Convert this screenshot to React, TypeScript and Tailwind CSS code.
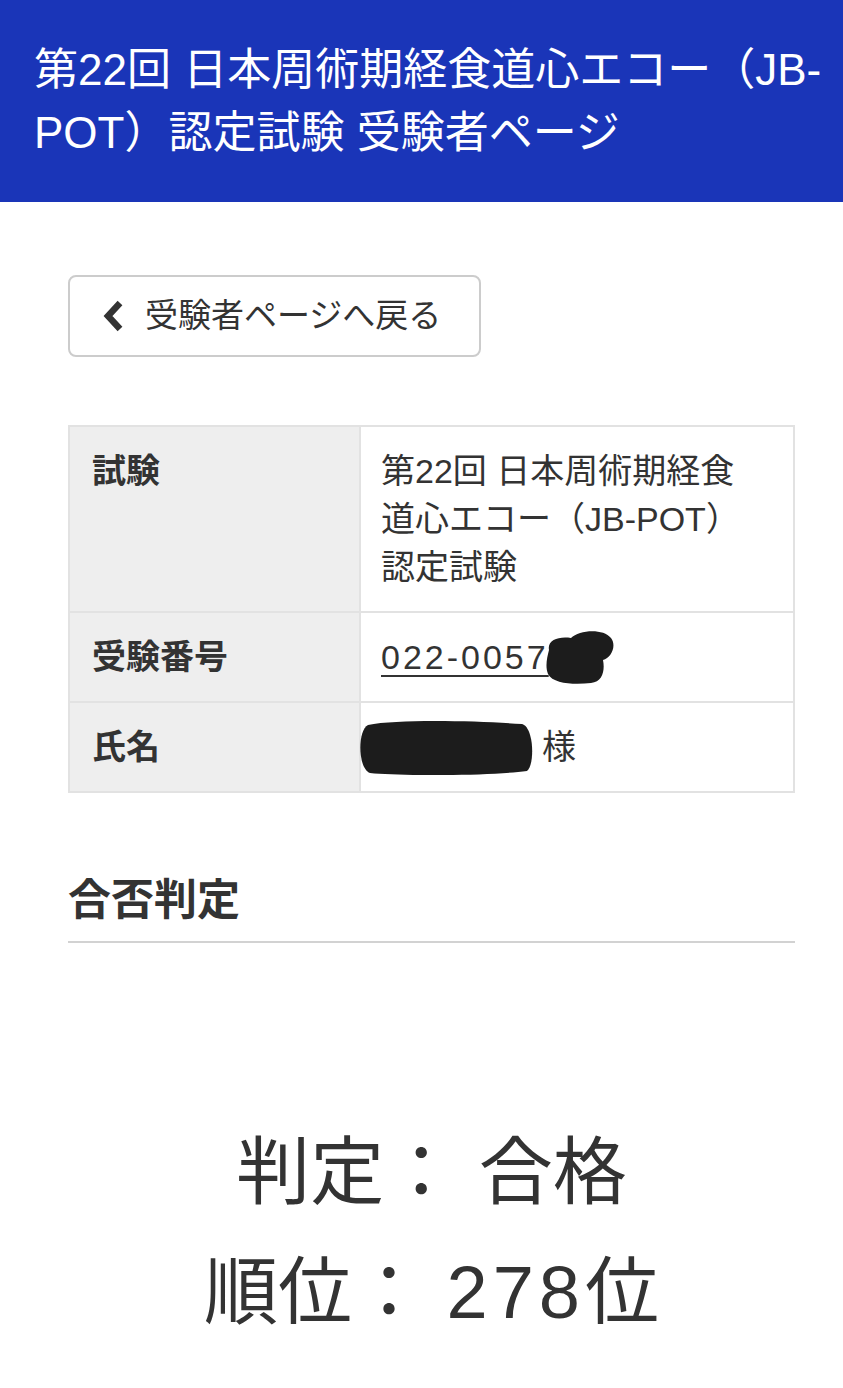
import type { ReactNode } from "react"

const FONT = "font-['Liberation_Sans','Noto_Sans_CJK_JP',sans-serif]"

function ChevronLeft() {
	return (
		<svg width="24" height="32" viewBox="0 0 24 32" aria-hidden="true">
			<polyline
				points="18,3 6,16 18,29"
				fill="none"
				stroke="#333333"
				strokeWidth="6.5"
				strokeLinejoin="miter"
				strokeLinecap="butt"
			/>
		</svg>
	)
}

// 黒塗り（個人情報の伏せ字）
function NumberBlot() {
	return (
		<svg width="70" height="54" viewBox="0 0 70 54" className="-ml-[4px] shrink-0" aria-hidden="true">
			<path
				d="M4 20 C2 10 14 6 26 8 C34 0 58 -2 66 8 C72 16 66 28 58 30 C60 40 58 52 46 53 C30 55 8 54 3 44 C0 36 2 28 4 20 Z"
				fill="#1c1c1c"
			/>
		</svg>
	)
}

function NameBlot() {
	return (
		<svg width="176" height="56" viewBox="0 0 176 56" className="-ml-[23px] shrink-0" aria-hidden="true">
			<path
				d="M10 6 C40 0 120 2 164 5 C176 8 177 46 169 52 C130 57 40 57 12 54 C0 50 -1 12 10 6 Z"
				fill="#1c1c1c"
			/>
		</svg>
	)
}

type RowProps = {
	label: string
	children: ReactNode
}

function InfoRow({ label, children }: RowProps) {
	return (
		<tr>
			<th className="border-2 border-[#e2e2e2] bg-[#eeeeee] px-[22px] py-[20px] text-left align-top text-[34px] leading-[48px] font-bold">
				{label}
			</th>
			<td className="border-2 border-[#e2e2e2] px-[20px] py-[20px] align-top text-[34px] leading-[48px]">
				{children}
			</td>
		</tr>
	)
}

export default function App() {
	return (
		<div className={`${FONT} min-h-[1388px] bg-white text-[#333333]`}>
			<header className="bg-[#1a35b8] pl-[34px] pr-[8px] py-[38px] text-white">
				<h1 className="text-[44px] leading-[63px] font-normal whitespace-nowrap">
					第22回 日本周術期経食道心エコー（JB-
					<br />
					POT）認定試験 受験者ページ
				</h1>
			</header>

			<main className="pl-[68px] pr-[48px] pt-[73px] pb-[38px]">
				<button
					type="button"
					className="inline-flex h-[82px] items-center gap-[19px] rounded-[8px] border-2 border-[#cccccc] bg-white pl-[32px] pr-[38px] text-[33px] text-[#333333]"
				>
					<ChevronLeft />
					<span>受験者ページへ戻る</span>
				</button>

				<table className="mt-[68px] w-full table-fixed border-collapse">
					<colgroup>
						<col className="w-[291px]" />
						<col />
					</colgroup>
					<tbody>
						<InfoRow label="試験">
							第22回 日本周術期経食
							<br />
							道心エコー（JB-POT）
							<br />
							認定試験
						</InfoRow>
						<InfoRow label="受験番号">
							<div className="flex h-[48px] items-center">
								<a href="#" className="tracking-[3px] underline decoration-2 underline-offset-[6px]">
									022-0057
								</a>
								<NumberBlot />
							</div>
						</InfoRow>
						<InfoRow label="氏名">
							<div className="flex h-[48px] items-center">
								<NameBlot />
								<span className="ml-[8px]">様</span>
							</div>
						</InfoRow>
					</tbody>
				</table>

				<h2 className="mt-[77px] border-b-2 border-[#d2d2d2] pb-[11px] text-[43px] leading-[60px] font-bold">
					合否判定
				</h2>

				<div className="mt-[170px] text-center text-[74px] leading-[120px]">
					<p>判定： 合格</p>
					<p>
						順位： <span className="tracking-[5px]">278</span>位
					</p>
				</div>
			</main>
		</div>
	)
}
